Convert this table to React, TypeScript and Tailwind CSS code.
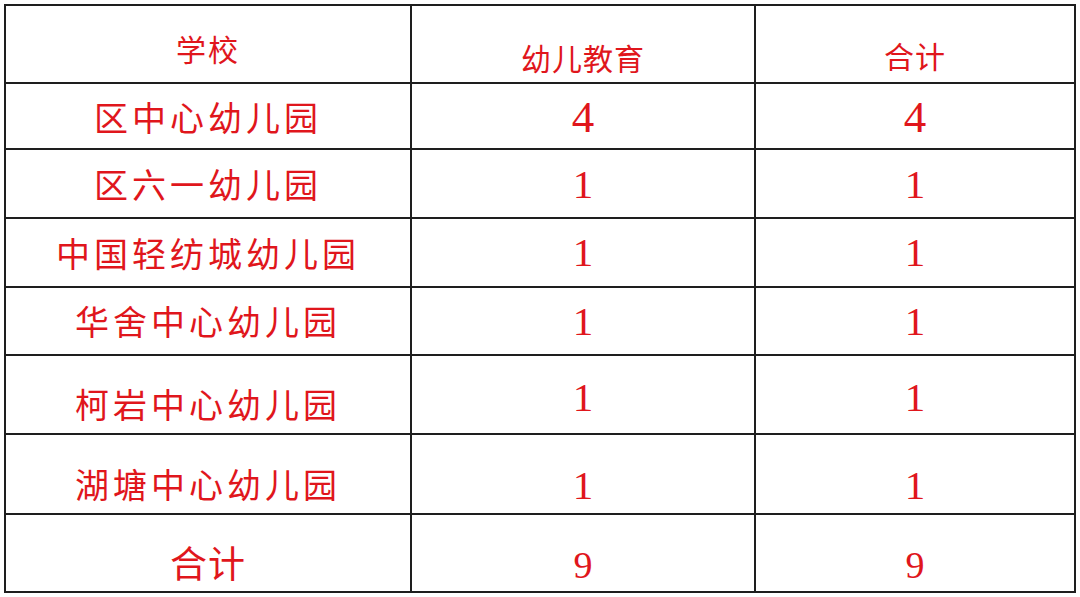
import React from "react";

type Row = { name: string; a: string; b: string; h: string; namePt: string; numPt: string };

const rows: Row[] = [
  { name: "区中心幼儿园", a: "4", b: "4", h: "h-[64px]", namePt: "pt-[2px]", numPt: "pt-[2px]" },
  { name: "区六一幼儿园", a: "1", b: "1", h: "h-[67px]", namePt: "pt-[1px]", numPt: "pt-[1px]" },
  { name: "中国轻纺城幼儿园", a: "1", b: "1", h: "h-[67px]", namePt: "pt-[0px]", numPt: "pt-[0px]" },
  { name: "华舍中心幼儿园", a: "1", b: "1", h: "h-[66px]", namePt: "pt-[0px]", numPt: "pt-[0px]" },
  { name: "柯岩中心幼儿园", a: "1", b: "1", h: "h-[77px]", namePt: "pt-[19px]", numPt: "pt-[5px]" },
  { name: "湖塘中心幼儿园", a: "1", b: "1", h: "h-[78px]", namePt: "pt-[20px]", numPt: "pt-[22px]" },
];

const cjk = "font-['Noto_Sans_CJK_SC','Noto_Sans',sans-serif]";
const serif = "font-['Liberation_Serif','DejaVu_Serif',serif]";

export default function App() {
  return (
    <div className="w-[1080px] h-[597px] bg-white p-[4px]">
      <div className="grid grid-cols-[404px_342px_318px] gap-[2px] bg-[#1e1e1e] p-[2px] w-[1072px]">
        <div className={`${cjk} h-[76px] bg-white flex items-center justify-center pt-[9px] text-[#e0161c] text-[30px] tracking-[2px]`}>
          学校
        </div>
        <div className={`${cjk} h-[76px] bg-white flex items-center justify-center pt-[26px] text-[#e0161c] text-[30px] tracking-[1px]`}>
          幼儿教育
        </div>
        <div className={`${cjk} h-[76px] bg-white flex items-center justify-center pt-[22px] text-[#e0161c] text-[30px] tracking-[1px]`}>
          合计
        </div>

        {rows.map((r) => (
          <React.Fragment key={r.name}>
            <div
              className={`${cjk} ${r.h} ${r.namePt} bg-white flex items-center justify-center text-[#e0161c] text-[34px] tracking-[4px] leading-none`}
            >
              {r.name}
            </div>
            <div
              className={`${serif} ${r.h} ${r.numPt} bg-white flex items-center justify-center text-[#e0161c] ${r.a === "4" ? "text-[45px]" : "text-[41px]"} leading-none`}
            >
              {r.a}
            </div>
            <div
              className={`${serif} ${r.h} ${r.numPt} bg-white flex items-center justify-center text-[#e0161c] ${r.b === "4" ? "text-[45px]" : "text-[41px]"} leading-none`}
            >
              {r.b}
            </div>
          </React.Fragment>
        ))}

        <div className={`${cjk} h-[76px] bg-white flex items-center justify-center pt-[18px] text-[#e0161c] text-[37px] tracking-[1px] leading-none`}>
          合计
        </div>
        <div className={`${serif} h-[76px] bg-white flex items-center justify-center pt-[24px] text-[#e0161c] text-[38px] leading-none`}>
          9
        </div>
        <div className={`${serif} h-[76px] bg-white flex items-center justify-center pt-[24px] text-[#e0161c] text-[38px] leading-none`}>
          9
        </div>
      </div>
    </div>
  );
}
